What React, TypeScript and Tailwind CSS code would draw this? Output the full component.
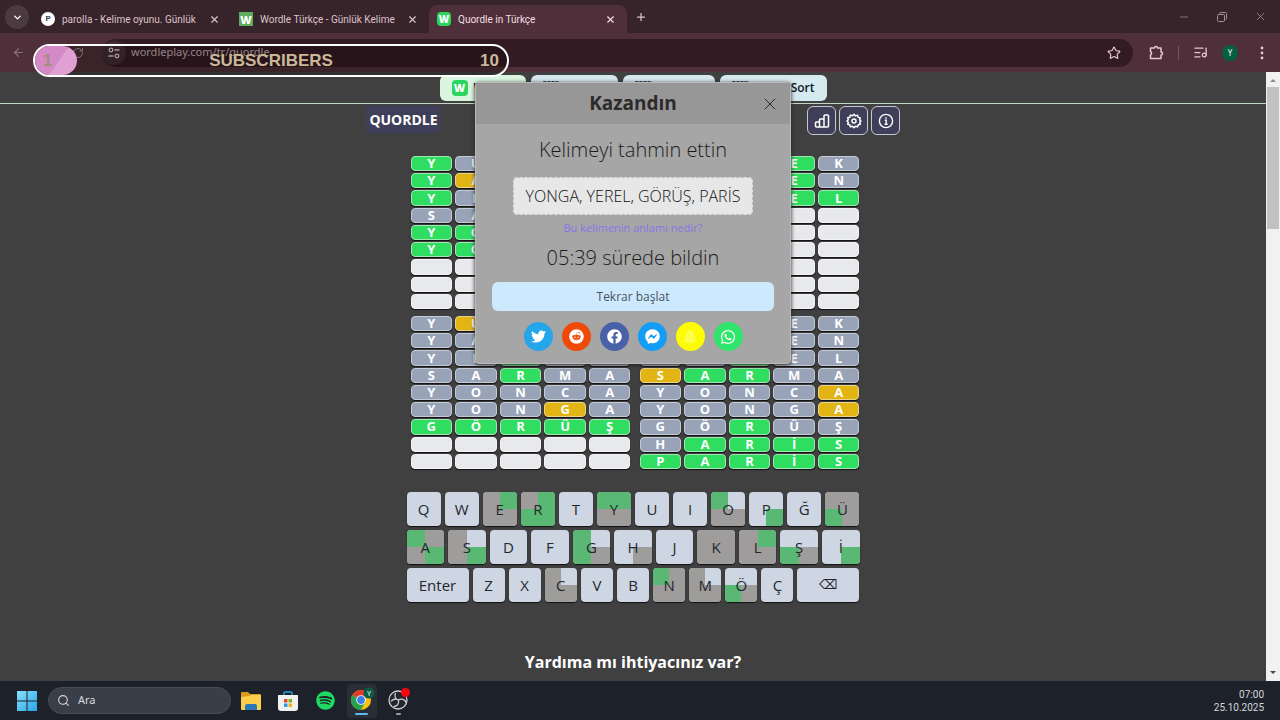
import type { ReactNode } from "react";
import clsx from "clsx";
import { ArrowLeft, ChevronDown, ListMusic, Minus, Plus, RotateCw, Search, Star, X } from "lucide-react";
import { FaFacebook, FaFacebookMessenger, FaReddit, FaSnapchatGhost, FaSpotify, FaTwitter, FaWhatsapp } from "react-icons/fa";

// one letter per cell: g = right place, y = wrong place, x = not in the word
type Row = [word: string, marks: string];

const boards: Row[][] = [
  [
    ["YÜREK", "gxxxx"],
    ["YAREN", "gyxxy"],
    ["YEREL", "gxxxx"],
    ["SARMA", "xxxxg"],
    ["YONCA", "gggxg"],
    ["YONGA", "ggggg"],
  ],
  [
    ["YÜREK", "gxggx"],
    ["YAREN", "gxggx"],
    ["YEREL", "ggggg"],
  ],
  [
    ["YÜREK", "xygxx"],
    ["YAREN", "xxgxx"],
    ["YEREL", "xxgxx"],
    ["SARMA", "xxgxx"],
    ["YONCA", "xxxxx"],
    ["YONGA", "xxxyx"],
    ["GÖRÜŞ", "ggggg"],
  ],
  [
    ["YÜREK", "xxgxx"],
    ["YAREN", "xggxx"],
    ["YEREL", "xxgxx"],
    ["SARMA", "yggxx"],
    ["YONCA", "xxxxy"],
    ["YONGA", "xxxxy"],
    ["GÖRÜŞ", "xxgxx"],
    ["HARİS", "xgggg"],
    ["PARİS", "ggggg"],
  ],
];

const keyRows = [
  ["Q", "W", "E", "R", "T", "Y", "U", "I", "O", "P", "Ğ", "Ü"],
  ["A", "S", "D", "F", "G", "H", "J", "K", "L", "Ş", "İ"],
  ["Enter", "Z", "X", "C", "V", "B", "N", "M", "Ö", "Ç", "⌫"],
];

// state of a key on each of the four boards
const keyMarks: Record<string, string> = {
  E: "xgxx",
  R: "xggg",
  Y: "ggxx",
  O: "g-xx",
  P: "---g",
  Ü: "xxgx",
  A: "gxxg",
  S: "x-xg",
  G: "g-gx",
  H: "---x",
  K: "xxxx",
  L: "xgxx",
  Ş: "--gx",
  İ: "---g",
  C: "x-xx",
  N: "gxxx",
  M: "x-xx",
  Ö: "--gx",
};

const cellColors: Record<string, string> = {
  g: "bg-[#2fdd60] border-[#a5e5b5]",
  y: "bg-[#e2b514] border-[#ead58e]",
  x: "bg-[#98a3b8] border-[#c5cbd6]",
};

const keyColors: Record<string, string> = {
  g: "bg-[#59b974]",
  x: "bg-[#9e9d9c]",
  "-": "bg-transparent",
};

function WordleMark({ className }: { className: string }) {
  return (
    <span className={clsx("grid shrink-0 place-items-center font-['Open_Sans',sans-serif] font-extrabold text-white", className)}>
      W
    </span>
  );
}

function Tab({ icon, title, active }: { icon: ReactNode; title: string; active?: boolean }) {
  return (
    <div
      className={clsx(
        "flex h-7 w-[198px] items-center gap-[7px] pr-2 pl-2 font-['Roboto',sans-serif] text-[10px]",
        active ? "rounded-t-lg bg-[#4f2f39] text-[#f3dfe4]" : "text-[#dcc3ca]"
      )}
    >
      {icon}
      <span className="flex-1 whitespace-nowrap">{title}</span>
      <button aria-label="Close tab" className="mr-[3px]">
        <X size={11} strokeWidth={2.5} />
      </button>
    </div>
  );
}

function BrowserChrome() {
  return (
    <header className="font-['Noto_Sans',sans-serif]">
      <div className="flex h-[33px] items-end bg-[#37242a]">
        <button aria-label="Search tabs" className="mb-1 ml-[5px] grid size-6 place-items-center self-end rounded-full bg-[#4b3a3f] text-white">
          <ChevronDown size={11} strokeWidth={3} />
        </button>
        <div className="ml-1 flex">
          <Tab
            icon={<span className="grid size-[14px] shrink-0 place-items-center rounded-full bg-white text-[8px] font-bold text-gray-700">P</span>}
            title="parolla - Kelime oyunu. Günlük"
          />
          <Tab icon={<WordleMark className="size-[14px] bg-[#5fae5d] text-[11px]" />} title="Wordle Türkçe - Günlük Kelime" />
          <Tab active icon={<WordleMark className="size-[14px] rounded-sm bg-[#2bd660] text-[10px]" />} title="Quordle in Türkçe" />
        </div>
        <button aria-label="New tab" className="mb-2.5 ml-2 text-[#dcc3ca]">
          <Plus size={12} strokeWidth={2.5} />
        </button>
        <div className="mb-2.5 ml-auto flex gap-[26px] pr-[13px] text-[#a08f94]">
          <button aria-label="Minimize">
            <Minus size={12} strokeWidth={1.5} />
          </button>
          <button aria-label="Restore">
            <svg width="12" height="12" viewBox="0 0 12 12" fill="none" stroke="currentColor">
              <rect x="1.5" y="3.5" width="7" height="7" rx="1" />
              <path d="M3.5 3.5V2.5a1 1 0 0 1 1-1h5a1 1 0 0 1 1 1v5a1 1 0 0 1-1 1h-1" />
            </svg>
          </button>
          <button aria-label="Close window">
            <X size={13} strokeWidth={1.5} />
          </button>
        </div>
      </div>

      <div className="flex h-[39px] items-center bg-[#4f2f39] text-[#e5c8d0]">
        <button aria-label="Back" className="ml-3 text-[#90747c]">
          <ArrowLeft size={13} />
        </button>
        <button aria-label="Reload" className="ml-[47px] text-[#b0979e]">
          <RotateCw size={12} />
        </button>
        <div className="ml-[18px] flex h-7 flex-1 items-center rounded-full bg-[#331b23] pr-3">
          <span className="grid size-6 place-items-center rounded-full bg-[#432d34]">
            <svg width="12" height="12" viewBox="0 0 12 12" fill="none" stroke="currentColor" strokeWidth="1.3">
              <circle cx="3" cy="3" r="1.8" />
              <path d="M6.5 3H11.500M.5 9H5.500" />
              <circle cx="9" cy="9" r="1.8" />
            </svg>
          </span>
          <input aria-label="Address" defaultValue="wordleplay.com/tr/quordle" className="ml-[5px] flex-1 bg-transparent text-[11px] text-[#c4afb5] outline-none" />
          <Star size={14} />
        </div>
        <div className="flex items-center pr-3 pl-4">
          <svg width="15" height="15" viewBox="0 0 15 15" fill="none" stroke="currentColor" strokeWidth="1.5" strokeLinejoin="round">
            <path d="M1.500 3H5.500a1.500 1.500 0 0 1 3 0H12v4a1.500 1.500 0 0 1 0 3v3.500H1.500V10a2 2 0 0 0 0-3.500z" />
          </svg>
          <span className="mx-[14px] h-3.5 w-px bg-[#75545e]" />
          <ListMusic size={15} />
          <span className="mr-[18px] ml-3.5 grid size-4 place-items-center rounded-full bg-[#065f3f] text-[8px] text-white">Y</span>
          <button aria-label="Menu">
            <svg width="12" height="14" viewBox="0 0 12 14" fill="currentColor">
              <circle cx="6" cy="2" r="1.4" />
              <circle cx="6" cy="7" r="1.4" />
              <circle cx="6" cy="12" r="1.4" />
            </svg>
          </button>
        </div>
      </div>
    </header>
  );
}

function SubscriberGoal() {
  return (
    <div className="absolute top-11 left-[33px] z-30 flex h-[33px] w-[476px] items-center justify-center rounded-full border-2 border-white bg-black/25 font-['Liberation_Sans',sans-serif] text-[17px] font-bold text-[#cbb798]">
      <span className="absolute inset-y-0 left-0 w-[42px] rounded-full bg-[linear-gradient(125deg,#d48ac6_55%,#e0a0d4_55%)] pl-2 leading-[29px] text-[#a58f7c]">1</span>
      <span>SUBSCRIBERS</span>
      <span className="absolute right-2">10</span>
    </div>
  );
}

const gameLinkClass = "flex h-[26px] items-center rounded-md px-3 text-[12px] font-semibold text-gray-900";

function GameNav() {
  return (
    <nav className="flex h-8 items-start justify-center gap-[5px] border-b border-[#c3d6c3] pt-[3px]">
      <a href="#wordle" className={clsx(gameLinkClass, "w-[86px] gap-1.5 bg-[#d9f5df]")}>
        <WordleMark className="size-4 rounded bg-[#2bd660] text-[11px]" />
        Wordle
      </a>
      <a href="#octordle" className={clsx(gameLinkClass, "w-[87px] gap-1.5 bg-[#d5e8ee]")}>
        <GridIcon />
        Octord
      </a>
      <a href="#squareword" className={clsx(gameLinkClass, "w-[92px] gap-1.5 bg-[#d5e8ee]")}>
        <GridIcon />
        Square
      </a>
      <a href="#sort" className={clsx(gameLinkClass, "w-[107px] justify-between bg-[#d5eaee]")}>
        <GridIcon />
        Sort
      </a>
    </nav>
  );
}

function GridIcon() {
  return (
    <svg width="17" height="16" viewBox="0 0 17 16" fill="none" stroke="#30455a" strokeDasharray="3 1">
      <path d="M.5 1.5h16v13H.5zM6 1.5v13M11 1.5v13M.5 8h16" />
    </svg>
  );
}

const toolClass = "grid size-[29px] place-items-center rounded-md border border-[#c6c6d6] bg-[#403f5a] text-white";

function Toolbar() {
  return (
    <div className="mx-auto mt-0.5 flex w-[534px] justify-between">
      <h1 className="grid h-[27px] w-[75px] place-items-center rounded-sm bg-[#403f5a] text-[14px] font-bold text-white">QUORDLE</h1>
      <div className="flex gap-[3px]">
        <button aria-label="Statistics" className={toolClass}>
          <svg width="16" height="16" viewBox="0 0 16 16" fill="none" stroke="currentColor" strokeWidth="1.5" strokeLinejoin="round">
            <path d="M1.500 10a1 1 0 0 1 1-1h3v5h-3a1 1 0 0 1-1-1zM5.500 7a1 1 0 0 1 1-1h3.500v8H5.500zM10 3a1 1 0 0 1 1-1h2.500a1 1 0 0 1 1 1v10a1 1 0 0 1-1 1H10z" />
          </svg>
        </button>
        <button aria-label="Settings" className={toolClass}>
          <svg width="16" height="16" viewBox="0 0 16 16" fill="none" stroke="currentColor" strokeWidth="1.5" strokeLinejoin="round">
            <circle cx="8" cy="8" r="2" />
            <path d="M8 1.3l1.5 1.6 2.1-.6.6 2.1 2.1.6-.6 2L15 8l-1.3 1.2.6 2-2.1.6-.6 2.1-2.1-.6L8 14.7l-1.5-1.4-2.1.6-.6-2.1-2.1-.6.6-2L1 8l1.3-1.2-.6-2 2.1-.6.6-2.1 2.1.6z" />
          </svg>
        </button>
        <button aria-label="How to play" className={toolClass}>
          <svg width="16" height="16" viewBox="0 0 16 16" fill="none" stroke="currentColor" strokeWidth="1.4">
            <circle cx="8" cy="8" r="6.6" />
            <path d="M6.8 7.3H8.2v4M6.6 11.3h3M8 4.2v1.5" />
          </svg>
        </button>
      </div>
    </div>
  );
}

function Board({ rows }: { rows: Row[] }) {
  const cells = Array.from({ length: 45 }, (_, i) => {
    const row = rows[Math.floor(i / 5)];
    return row ? { letter: row[0][i % 5], mark: row[1][i % 5] } : null;
  });

  return (
    <div className="grid h-[153px] grid-cols-5 grid-rows-9 gap-x-[3px] gap-y-0.5">
      {cells.map((cell, i) => (
        <div
          key={i}
          className={clsx(
            "flex min-h-0 items-center justify-center rounded border text-[13px] leading-none font-bold text-white shadow-[0_1px_1px_#111]",
            cell ? cellColors[cell.mark] : "border-[#f4f4f6] bg-[#e8e9ed]"
          )}
        >
          {cell?.letter}
        </div>
      ))}
    </div>
  );
}

function Key({ label }: { label: string }) {
  const marks = keyMarks[label];
  const wide = label === "Enter" || label === "⌫";

  return (
    <button
      className={clsx(
        "relative h-[34px] overflow-hidden rounded bg-[#cfd6e3] text-[#24272c] shadow-[0_1px_1px_#111]",
        wide ? "w-[62px]" : "flex-1",
        label === "⌫" ? "font-['DejaVu_Sans',sans-serif] text-[13px]" : "text-[15px]"
      )}
    >
      {marks && (
        <span className="absolute inset-0 grid grid-cols-2 grid-rows-2">
          {marks.split("").map((mark, i) => (
            <span key={i} className={keyColors[mark]} />
          ))}
        </span>
      )}
      <span className="relative">{label}</span>
    </button>
  );
}

const shares = [
  { name: "Twitter", color: "bg-[#26a6ea]", icon: <FaTwitter size={15} /> },
  { name: "Reddit", color: "bg-[#f04a08]", icon: <FaReddit size={15} /> },
  { name: "Facebook", color: "bg-[#4861a8]", icon: <FaFacebook size={15} /> },
  { name: "Messenger", color: "bg-[#149df5]", icon: <FaFacebookMessenger size={15} /> },
  { name: "Snapchat", color: "bg-[#fdfc02]", icon: <FaSnapchatGhost size={14} className="text-[#fdfd50]" /> },
  { name: "WhatsApp", color: "bg-[#2fe56b]", icon: <FaWhatsapp size={16} /> },
];

function WinDialog() {
  return (
    <div
      role="dialog"
      aria-labelledby="win-title"
      className="absolute top-2.5 left-1/2 z-20 w-[316px] -translate-x-1/2 rounded-sm border border-[#b9b9b9] bg-[#a6a6a6] text-[#2b2b2b] shadow-[0_1px_4px_#222]"
    >
      <div className="relative grid h-[41px] place-items-center bg-[#979797]">
        <h2 id="win-title" className="text-[19px] font-bold">
          Kazandın
        </h2>
        <button aria-label="Kapat" className="absolute right-2.5">
          <X size={20} strokeWidth={1.2} />
        </button>
      </div>
      <div className="flex flex-col items-center px-4 pt-3 pb-3">
        <p className="text-[20px] leading-7 font-light text-[#1c1c1c]">Kelimeyi tahmin ettin</p>
        <p className="mt-[13px] flex h-[38px] w-[240px] items-center justify-center rounded border border-dashed border-[#bdbdbd] bg-[#e7e7e7] text-[16px] font-light whitespace-nowrap text-[#111]">
          YONGA, YEREL, GÖRÜŞ, PARİS
        </p>
        <a href="#anlam" className="mt-[5px] text-[11px] leading-4 text-[#8674e6]">
          Bu kelimenin anlamı nedir?
        </a>
        <p className="mt-2 text-[20px] leading-7 font-light text-[#1c1c1c]">05:39 sürede bildin</p>
        <button className="mt-2.5 h-[29px] w-full rounded-md bg-[#cde9fd] text-[12px] text-[#4a545e]">Tekrar başlat</button>
        <div className="mt-[11px] flex gap-[9px]">
          {shares.map((share) => (
            <button key={share.name} aria-label={share.name} className={clsx("grid size-[29px] place-items-center rounded-full text-white", share.color)}>
              {share.icon}
            </button>
          ))}
        </div>
      </div>
    </div>
  );
}

function Scrollbar() {
  return (
    <div className="flex w-3.5 flex-col items-center bg-[#f1f1f1]">
      <svg width="14" height="15" viewBox="0 0 14 15" fill="#8b8b8b">
        <path d="M4 10l3-3 3 3z" />
      </svg>
      <div className="h-[142px] w-3 bg-[#c1c1c1]" />
      <svg className="mt-auto" width="14" height="15" viewBox="0 0 14 15" fill="#444">
        <path d="M4 5l3 3 3-3z" />
      </svg>
    </div>
  );
}

function Taskbar() {
  return (
    <footer className="flex h-[39px] shrink-0 items-center bg-[#1d212a] pr-4 pl-[17px] font-['Noto_Sans',sans-serif] text-[#d6d8dc]">
      <button aria-label="Start">
        <svg width="20" height="20" viewBox="0 0 20 20">
          <defs>
            <linearGradient id="win" x1="0" y1="0" x2="1" y2="1">
              <stop offset="0" stopColor="#8ae0fb" />
              <stop offset="1" stopColor="#27a5ea" />
            </linearGradient>
          </defs>
          <path fill="url(#win)" d="M0 0h9.5v9.5H0zM10.5 0H20v9.5h-9.5zM0 10.5h9.5V20H0zM10.5 10.5H20V20h-9.5z" />
        </svg>
      </button>
      <label className="ml-[11px] flex h-[27px] w-[183px] items-center gap-2 rounded-full border border-[#484c55] bg-[#3a3e48] pl-2">
        <Search size={13} />
        <input aria-label="Ara" placeholder="Ara" className="w-24 bg-transparent text-[11px] outline-none placeholder:text-[#d6d8dc]" />
      </label>

      <div className="ml-[5px] flex items-center gap-[7px]">
        <button aria-label="Explorer" className="grid size-[30px] place-items-center">
          <svg width="22" height="20" viewBox="0 0 22 20">
            <path fill="#d99a1c" d="M1 2a1 1 0 0 1 1-1h6l2 2h10a1 1 0 0 1 1 1v5H1z" />
            <path fill="#fbcf4b" d="M1 6l8-1 2-1h10v14a1 1 0 0 1-1 1H2a1 1 0 0 1-1-1z" />
            <path fill="#2a78b8" d="M5 19v-4a2 2 0 0 1 2-2h8a2 2 0 0 1 2 2v4z" />
          </svg>
        </button>
        <button aria-label="Store" className="grid size-[30px] place-items-center">
          <svg width="20" height="20" viewBox="0 0 20 20">
            <path fill="none" stroke="#2f9fe0" strokeWidth="1.4" d="M6 4V2a1 1 0 0 1 1-1h6a1 1 0 0 1 1 1v2" />
            <path fill="#f1f1f1" d="M0 4h20v13a3 3 0 0 1-3 3H3a3 3 0 0 1-3-3z" />
            <path fill="#e34c26" d="M6 8h3.5v3.5H6z" />
            <path fill="#7ab51d" d="M10.5 8H14v3.5h-3.5z" />
            <path fill="#2a9fe0" d="M6 12.5h3.5V16H6z" />
            <path fill="#f2b01e" d="M10.5 12.5H14V16h-3.5z" />
          </svg>
        </button>
        <button aria-label="Spotify" className="grid size-[30px] place-items-center text-[#1fd962]">
          <FaSpotify size={19} />
        </button>
        <button aria-label="Chrome" className="grid h-[34px] w-[30px] place-items-center rounded bg-[#2a2e37]">
          <svg width="28" height="28" viewBox="0 0 28 28">
            <circle cx="13" cy="13" r="10" fill="#fbc116" />
            <path fill="#e33b2e" d="M13 13L4.34 8A10 10 0 0 1 21.66 8z" />
            <path fill="#27a14b" d="M13 13L4.34 8A10 10 0 0 0 13 23l4-8z" />
            <circle cx="13" cy="13" r="4.8" fill="#fff" />
            <circle cx="13" cy="13" r="3.9" fill="#3d7fea" />
            <circle cx="21" cy="6" r="5.5" fill="#0b5c43" />
            <text x="21" y="8.5" fill="#fff" fontSize="7" textAnchor="middle">
              Y
            </text>
            <rect x="7" y="26" width="13" height="2" rx="1" fill="#5fb8ee" />
          </svg>
        </button>
        <button aria-label="OBS" className="grid h-[34px] w-[30px] place-items-center">
          <svg width="28" height="28" viewBox="0 0 28 28" fill="none" stroke="#cfd0d4" strokeWidth="1.3">
            <circle cx="13" cy="13" r="9" fill="#24262c" />
            <path d="M10.5 6c-1.500 3 0 6.500 3 7M13.500 13c3-2 6.500-.5 7.500 2.500M13.500 13c1 3.500-1.500 6.500-5 6.500M13 13c-2-1.500-5.500-1-7 1.500" />
            <circle cx="20.5" cy="5.5" r="4.500" fill="#f5060c" stroke="none" />
            <rect x="11" y="26" width="5" height="2" rx="1" fill="#9a9ca0" stroke="none" />
          </svg>
        </button>
      </div>

      <div className="ml-auto text-right font-['Roboto',sans-serif] text-[10px] leading-[13px]">
        <p>07:00</p>
        <p>25.10.2025</p>
      </div>
    </footer>
  );
}

export default function App() {
  return (
    <div className="relative flex h-screen flex-col overflow-hidden bg-[#404040]">
      <BrowserChrome />
      <SubscriberGoal />

      <div className="flex min-h-0 flex-1">
        <main className="relative flex-1 overflow-hidden font-['Open_Sans',sans-serif]">
          <GameNav />
          <Toolbar />
          <div className="mx-auto mt-[21px] grid w-[453px] grid-cols-2 gap-x-[9px] gap-y-[7px] pl-1">
            {boards.map((rows, i) => (
              <Board key={i} rows={rows} />
            ))}
          </div>
          <div className="mx-auto mt-[23px] flex w-[453px] flex-col gap-1">
            {keyRows.map((row, i) => (
              <div key={i} className="flex gap-1">
                {row.map((label) => (
                  <Key key={label} label={label} />
                ))}
              </div>
            ))}
          </div>
          <h2 className="mt-12 text-center text-[16px] font-bold text-white">Yardıma mı ihtiyacınız var?</h2>
          <WinDialog />
        </main>
        <Scrollbar />
      </div>

      <Taskbar />
    </div>
  );
}
